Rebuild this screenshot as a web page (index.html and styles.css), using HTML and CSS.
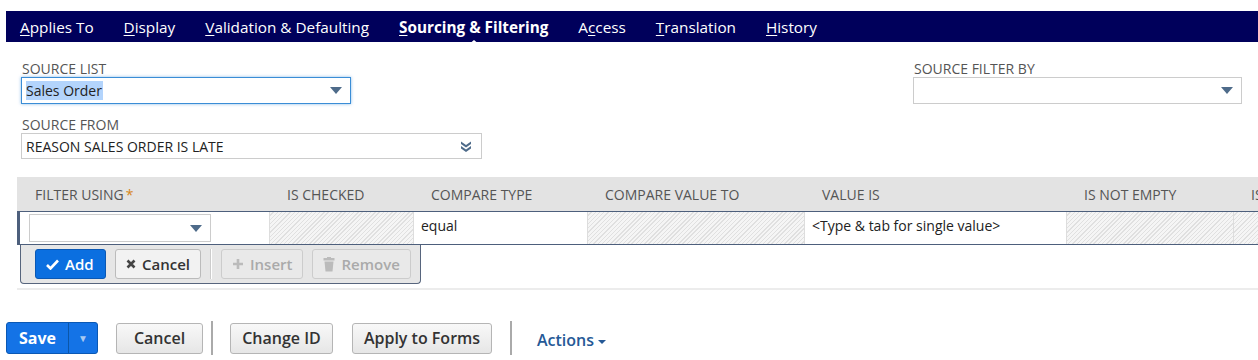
FILE: index.html
```html
<!DOCTYPE html>
<html lang="en">
<head>
    <meta charset="UTF-8">
    <title>Sourcing &amp; Filtering</title>
    <link rel="stylesheet" href="styles.css">
</head>
<body>
    <div class="tabs">
        <a class="tab"><u>A</u>pplies To</a>
        <a class="tab"><u>D</u>isplay</a>
        <a class="tab"><u>V</u>alidation &amp; Defaulting</a>
        <a class="tab active"><u>S</u>ourcing &amp; Filtering</a>
        <a class="tab">A<u>c</u>cess</a>
        <a class="tab"><u>T</u>ranslation</a>
        <a class="tab"><u>H</u>istory</a>
    </div>

    <div class="fields">
        <div class="field-col">
            <div class="field">
                <label>Source List</label>
                <div class="select focused w-list">
                    <span class="picked">Sales Order</span>
                    <span class="arrow"></span>
                </div>
            </div>
            <div class="field">
                <label>Source From</label>
                <div class="select w-from">
                    <span>REASON SALES ORDER IS LATE</span>
                    <svg class="dbl" width="12" height="12" viewBox="0 0 12 12">
                        <path d="M1 1.5 L6 5 L11 1.5 L11 4 L6 7.5 L1 4 Z" fill="#4e6b8a"/>
                        <path d="M1 6 L6 9.5 L11 6 L11 8.5 L6 12 L1 8.5 Z" fill="#4e6b8a"/>
                    </svg>
                </div>
            </div>
        </div>
        <div class="field-col right">
            <div class="field">
                <label>Source Filter By</label>
                <div class="select w-filter">
                    <span></span>
                    <span class="arrow"></span>
                </div>
            </div>
        </div>
    </div>

    <div class="grid-wrap">
        <div class="grid">
            <div class="row head">
                <div class="c c1">Filter Using<span class="req">*</span></div>
                <div class="c c2">Is Checked</div>
                <div class="c c3">Compare Type</div>
                <div class="c c4">Compare Value To</div>
                <div class="c c5">Value Is</div>
                <div class="c c6">Is Not Empty</div>
                <div class="c c7">Is Empty</div>
            </div>
            <div class="row edit">
                <div class="c c1">
                    <div class="select small">
                        <span></span>
                        <span class="arrow"></span>
                    </div>
                </div>
                <div class="c c2 hatch"></div>
                <div class="c c3">equal</div>
                <div class="c c4 hatch"></div>
                <div class="c c5">&lt;Type &amp; tab for single value&gt;</div>
                <div class="c c6 hatch"></div>
                <div class="c c7 hatch"></div>
            </div>
        </div>
        <div class="row-actions">
            <button class="btn blue">
                <svg width="13" height="11" viewBox="0 0 13 11"><path d="M1 6 L4.5 9.5 L12 1.5" stroke="#fff" stroke-width="2.6" fill="none"/></svg>
                Add
            </button>
            <button class="btn">
                <svg width="10" height="10" viewBox="0 0 10 10"><path d="M1.5 1.5 L8.5 8.5 M8.5 1.5 L1.5 8.5" stroke="#444" stroke-width="2.6"/></svg>
                Cancel
            </button>
            <span class="vsep"></span>
            <button class="btn off">
                <svg width="12" height="12" viewBox="0 0 12 12"><path d="M6 1 V11 M1 6 H11" stroke="#bbb" stroke-width="2.6"/></svg>
                Insert
            </button>
            <button class="btn off">
                <svg width="12" height="15" viewBox="0 0 12 15"><rect x="0.5" y="1" width="11" height="2.5" fill="#bbb"/><rect x="4" y="0" width="4" height="2" fill="#bbb"/><path d="M1.5 4.5 H10.5 L9.5 14.5 H2.5 Z" fill="#bbb"/></svg>
                Remove
            </button>
        </div>
        <div class="grid-foot"></div>
    </div>

    <div class="footer">
        <div class="split">
            <button class="save">Save</button>
            <button class="save-drop">&#9660;</button>
        </div>
        <button class="fbtn b-cancel">Cancel</button>
        <span class="fsep first"></span>
        <button class="fbtn b-change">Change ID</button>
        <button class="fbtn b-apply">Apply to Forms</button>
        <span class="fsep"></span>
        <a class="actions">Actions <span class="caret"></span></a>
    </div>
</body>
</html>
```

FILE: styles.css
```css
* {
    margin: 0;
    padding: 0;
    box-sizing: border-box;
    font-family: 'Open Sans', 'Noto Sans', sans-serif;
}

body {
    background: #fff;
    color: #333;
    width: 1258px;
    height: 360px;
    overflow: hidden;
}

/* tab strip */
.tabs {
    margin: 11px 0 0 6px;
    height: 31px;
    background: #00005b;
    display: flex;
    align-items: center;
    gap: 30px;
    padding-left: 14px;
}

.tab {
    position: relative;
    color: #fff;
    font-size: 15.3px;
    white-space: nowrap;
}

.tab u {
    text-decoration-thickness: 1px;
    text-underline-offset: 2px;
}

.tab.active {
    font-weight: 700;
}

.tab.active::after {
    content: '';
    position: absolute;
    left: 50%;
    bottom: -8px;
    margin-left: -6px;
    border-left: 6px solid transparent;
    border-right: 6px solid transparent;
    border-bottom: 5px solid #fff;
}

/* header fields */
.fields {
    display: flex;
    padding: 18px 0 0 21px;
}

.field-col.right {
    margin-left: 431px;
}

.field {
    margin-bottom: 12px;
}

.field label {
    display: block;
    font-size: 14px;
    line-height: 17px;
    color: #555;
    text-transform: uppercase;
    padding-left: 1px;
}

.select {
    display: flex;
    align-items: center;
    justify-content: space-between;
    height: 26px;
    border: 1px solid #ccc;
    background: #fff;
    padding: 0 8px 0 4px;
    font-size: 14px;
    color: #222;
}

.select.focused {
    height: 27px;
    border: 1px solid #3b8dd6;
    box-shadow: 0 0 3px rgba(59, 141, 214, 0.6);
}

.picked {
    background: #b3d4fc;
    line-height: 19px;
    padding-right: 1px;
}

.w-list { width: 330px; }
.w-from { width: 461px; }
.w-filter { width: 329px; height: 27px; }

.arrow {
    width: 0;
    height: 0;
    border-left: 6px solid transparent;
    border-right: 6px solid transparent;
    border-top: 7px solid #4e6b8a;
}

.dbl {
    margin-right: 1px;
}

/* sublist grid */
.grid-wrap {
    margin: 6px 0 0 17px;
    overflow: hidden;
}

.grid {
    width: 1400px;
}

.row {
    display: flex;
}

.row.head {
    background: #e3e3e3;
    height: 34px;
    align-items: center;
    font-size: 14px;
    color: #555;
    text-transform: uppercase;
}

.row.head .c {
    padding-left: 17px;
}

.row.head .c1 {
    padding-left: 18px;
}

.req {
    color: #d6861c;
    margin-left: 2px;
}

.c1 { width: 253px; }
.c2 { width: 144px; }
.c3 { width: 174px; }
.c4 { width: 217px; }
.c5 { width: 262px; }
.c6 { width: 167px; }
.c7 { width: 183px; }

.row.edit {
    height: 34px;
    border-top: 1px solid #4d5f7c;
    border-bottom: 1px solid #4d5f7c;
    font-size: 14px;
    color: #222;
}

.row.edit .c {
    border-right: 1px solid #ddd;
    padding: 4px 7px;
    background: #fff;
}

.row.edit .c1 {
    border-left: 3px solid #4d5f7c;
    padding: 2px 0 0 9px;
}

.select.small {
    width: 182px;
    height: 28px;
}

.hatch {
    background: repeating-linear-gradient(135deg, #f5f5f5 0, #f5f5f5 2px, #e0e0e0 2px, #e0e0e0 3px) !important;
}

.row-actions {
    display: flex;
    align-items: center;
    gap: 9px;
    width: 401px;
    height: 39px;
    margin-left: 3px;
    padding-left: 14px;
    background: #e6e6e6;
    border: 1px solid #57657d;
    border-top: none;
    border-radius: 0 0 4px 4px;
}

.btn {
    display: flex;
    align-items: center;
    gap: 6px;
    height: 30px;
    padding: 0 10px;
    font-size: 15px;
    font-weight: 600;
    color: #333;
    background: #f2f2f2;
    border: 1px solid #bbb;
    border-radius: 3px;
}

.btn.blue {
    background: #0b6fe0;
    border-color: #0a58b4;
    color: #fff;
    width: 71px;
}

.btn.off {
    color: #aaa;
    background: #e9e9e9;
    border-color: #ccc;
}

.vsep {
    width: 2px;
    height: 30px;
    background: #fff;
    border-left: 1px solid #ccc;
}

.grid-foot {
    height: 2px;
    background: #ececec;
    margin-top: 4px;
}

/* footer buttons */
.footer {
    display: flex;
    align-items: center;
    margin: 31px 0 0 6px;
}

.split {
    display: flex;
    height: 32px;
    border: 1px solid #0a58b4;
    border-radius: 3px;
    background: #1473e6;
    overflow: hidden;
}

.save {
    width: 61px;
    border: none;
    background: transparent;
    color: #fff;
    font-size: 16px;
    font-weight: 700;
}

.save-drop {
    width: 29px;
    border: none;
    border-left: 1px solid #0b56a8;
    background: transparent;
    color: #a9c9f1;
    font-size: 10px;
}

.fbtn {
    height: 31px;
    font-size: 16px;
    font-weight: 600;
    color: #333;
    background: linear-gradient(#f8f8f8, #e6e6e6);
    border: 1px solid #b5b5b5;
    border-radius: 3px;
}

.b-cancel { width: 87px; margin-left: 18px; }
.b-change { width: 103px; margin-left: 17px; }
.b-apply { width: 140px; margin-left: 19px; }

.fsep {
    width: 2px;
    height: 34px;
    background: #aaa;
    margin-left: 18px;
}

.fsep.first {
    margin-left: 8px;
}

.actions {
    margin-left: 25px;
    margin-top: 4px;
    font-size: 16px;
    font-weight: 600;
    color: #255996;
}

.caret {
    display: inline-block;
    vertical-align: middle;
    border-left: 4px solid transparent;
    border-right: 4px solid transparent;
    border-top: 4px solid #255996;
}
```
